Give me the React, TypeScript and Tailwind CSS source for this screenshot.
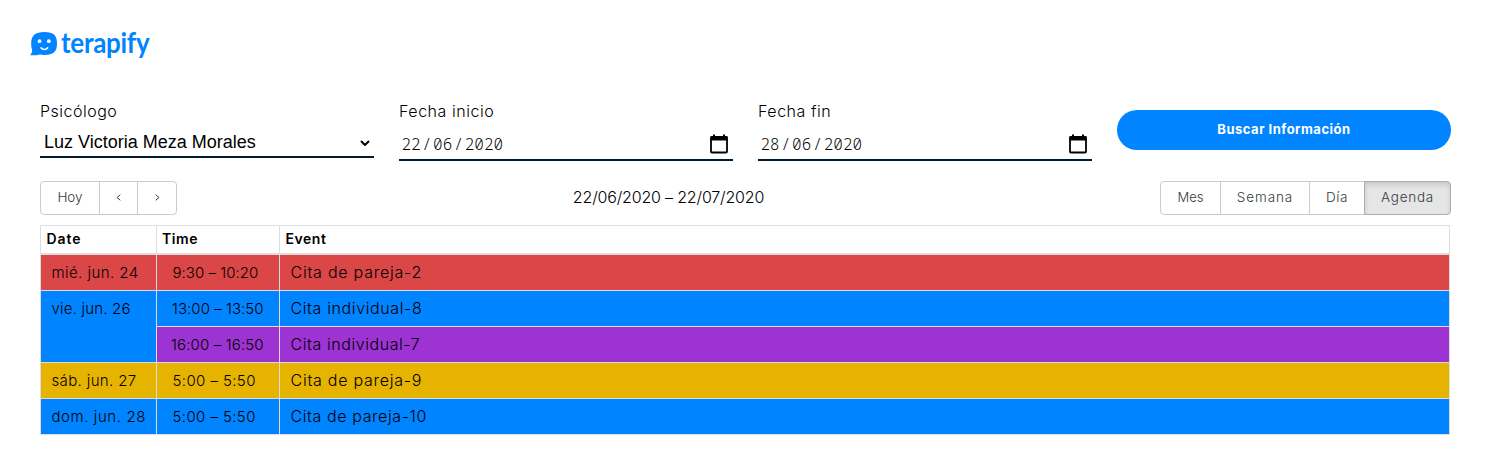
import type { ReactNode } from "react";

const BLUE = "bg-[#0084ff]";
const RED = "bg-[#db4646]";
const PURPLE = "bg-[#9d33d3]";
const YELLOW = "bg-[#e6b300]";

type Row = {
  date?: { text: string; tracking: string; span?: number };
  time: string;
  timeClass: string;
  event: string;
  eventClass: string;
  color: string;
};

const rows: Row[] = [
  { date: { text: "mié. jun. 24", tracking: "tracking-[0.44px]" }, time: "9:30 – 10:20", timeClass: "pl-[15.5px] tracking-[0.04px]", event: "Cita de pareja-2", eventClass: "tracking-[0.77px]", color: RED },
  { date: { text: "vie. jun. 26", tracking: "tracking-[0.2px]", span: 2 }, time: "13:00 – 13:50", timeClass: "pl-[15px] tracking-[0.04px]", event: "Cita individual-8", eventClass: "tracking-[0.62px]", color: BLUE },
  { time: "16:00 – 16:50", timeClass: "pl-[14px] tracking-[0.14px]", event: "Cita individual-7", eventClass: "tracking-[0.57px]", color: PURPLE },
  { date: { text: "sáb. jun. 27", tracking: "tracking-[0.36px]" }, time: "5:00 – 5:50", timeClass: "pl-[15.5px] tracking-[0.4px]", event: "Cita de pareja-9", eventClass: "tracking-[0.75px]", color: YELLOW },
  { date: { text: "dom. jun. 28", tracking: "tracking-[0.58px]" }, time: "5:00 – 5:50", timeClass: "pl-[15.5px] tracking-[0.4px]", event: "Cita de pareja-10", eventClass: "tracking-[0.6px]", color: BLUE },
];

function Logo() {
  return (
    <div className="flex h-[30px] items-start text-[#0084ff]">
      <svg className="mt-[2px] h-6 w-7" viewBox="0 0 28 24" fill="none">
        <path
          d="M14.500 0C23.500 0 27 3.200 27 11.400S23.500 22.900 14.500 22.900c-1.700 0-3.200-.1-4.600-.4C7.200 23.300 3.600 23.500 0 23.200c1.700-1.500 2.300-3.300 2.100-5.600C1.400 15.900 1.200 13.800 1.200 11.400 1.200 3.200 5.500 0 14.500 0Z"
          fill="currentColor"
        />
        <circle cx="9.500" cy="9.200" r="1.900" fill="white" />
        <circle cx="18.800" cy="9.200" r="1.900" fill="white" />
        <path d="M11 15.800c1.700 2.400 5 2.400 6.700 0" stroke="white" strokeWidth="1.500" strokeLinecap="round" />
      </svg>
      <span className="ml-[3px] mt-[-3px] origin-center scale-y-[1.08] whitespace-nowrap font-['Lato'] text-[26px] font-bold leading-[30px] tracking-[-0.28px]">
        terapify
      </span>
    </div>
  );
}

function Field({ label, tracking, children }: { label: string; tracking: string; children: ReactNode }) {
  return (
    <label className="flex w-[334px] flex-col">
      <span className={`h-6 whitespace-nowrap text-[16px] font-light leading-6 ${tracking}`}>{label}</span>
      {children}
    </label>
  );
}

function DateInput({ day, month, year }: { day: string; month: string; year: string }) {
  return (
    <div className="flex h-[38px] items-center justify-between border-b-2 border-[#001c33] pl-[2.5px] pr-1">
      <span className="pt-[6px] font-['Noto_Sans_Mono','Liberation_Mono',monospace] text-[16px] font-[350] leading-6">
        {day}
        <span className="px-[1.4px]">/</span>
        {month}
        <span className="px-[1.4px]">/</span>
        {year}
      </span>
      <svg className="mt-[5px] h-5 w-5" viewBox="0 0 20 20" fill="none">
        <rect x="2" y="3" width="16" height="15.500" rx="1" stroke="black" strokeWidth="1.800" />
        <path d="M1.500 2.200h17V6.500h-17zM4 0.500h2v2H4zM14 0.500h2v2h-2z" fill="black" />
      </svg>
    </div>
  );
}

const groupButton =
  "-ml-px flex h-[34px] items-center justify-center border border-[#cccccc] pb-px text-[#373a3c] font-light first:ml-0 first:rounded-l last:rounded-r";

export default function App() {
  return (
    <main className="min-h-[473px] w-[1491px] bg-white font-['Inter','Open_Sans',sans-serif] text-black">
      <header className="pl-[30px] pt-[30px]">
        <Logo />
      </header>

      <section className="mt-[39px] flex gap-[25px] px-10">
        <Field label="Psicólogo" tracking="tracking-[0.5px]">
          <div className="flex h-[35px] items-center justify-between border-b-2 border-[#001c33] pl-1 pr-1">
            <span className="whitespace-nowrap pt-[5px] font-['Liberation_Sans',Arial,sans-serif] text-[18px] leading-6">
              Luz Victoria Meza Morales
            </span>
            <svg className="mt-[6px] h-[6px] w-[10px]" viewBox="0 0 10 6" fill="none">
              <path d="M1 1l4 4 4-4" stroke="black" strokeWidth="2" />
            </svg>
          </div>
        </Field>
        <Field label="Fecha inicio" tracking="tracking-[0.54px]">
          <DateInput day="22" month="06" year="2020" />
        </Field>
        <Field label="Fecha fin" tracking="tracking-[0.54px]">
          <DateInput day="28" month="06" year="2020" />
        </Field>
        <button className="mt-[11px] h-10 w-[334px] rounded-full bg-[#0084ff] pb-px text-[13px] font-bold tracking-[0.5px] text-white">
          Buscar Información
        </button>
      </section>

      <section className="mt-5 flex items-center justify-between px-10">
        <div className="flex w-[291px]">
          <button className={`${groupButton} w-[60px] text-[13.5px]`}>Hoy</button>
          <button className={`${groupButton} w-[39px]`}>
            <svg className="h-[7px] w-[5px]" viewBox="0 0 5 7" fill="none">
              <path d="M4.300.7 1 3.500l3.300 2.800" stroke="currentColor" />
            </svg>
          </button>
          <button className={`${groupButton} w-[40px]`}>
            <svg className="h-[7px] w-[5px]" viewBox="0 0 5 7" fill="none">
              <path d="M.7.7 4 3.500.7 6.300" stroke="currentColor" />
            </svg>
          </button>
        </div>
        <span className="ml-[-154px] whitespace-nowrap pb-[3px] text-[16px] font-light tracking-[-0.18px]">22/06/2020 – 22/07/2020</span>
        <div className="flex">
          <button className={`${groupButton} w-[61px] text-[13px]`}>Mes</button>
          <button className={`${groupButton} w-[90px] text-[13.5px] tracking-[0.9px]`}>Semana</button>
          <button className={`${groupButton} w-[56px] text-[13.5px] tracking-[0.6px]`}>Día</button>
          <button className="-ml-px flex h-[34px] w-[87px] items-center justify-center rounded-r border border-[#adadad] bg-[#e6e6e6] pb-px text-[13.5px] font-light tracking-[0.75px] text-[#373a3c] shadow-[inset_0_3px_5px_rgba(0,0,0,0.125)]">
            Agenda
          </button>
        </div>
      </section>

      <table className="ml-10 mt-[10px] w-[1410px] table-fixed border-separate border-spacing-0 border-l border-t border-[#dddddd]">
        <colgroup>
          <col className="w-[116px]" />
          <col className="w-[123px]" />
          <col className="w-[1170px]" />
        </colgroup>
        <thead>
          <tr className="h-[29px] text-left text-[14px] leading-5">
            <th className="border-b-2 border-r border-[#dddddd] p-0 pb-[2px] pl-[5.5px] font-semibold tracking-[0.95px]">Date</th>
            <th className="border-b-2 border-r border-[#dddddd] p-0 pb-[2px] pl-[5px] font-semibold tracking-[0.6px]">Time</th>
            <th className="border-b-2 border-r border-[#dddddd] p-0 pb-[2px] pl-[5.5px] font-semibold tracking-[0.55px]">Event</th>
          </tr>
        </thead>
        <tbody>
          {rows.map((row, i) => (
            <tr key={i} className={`h-9 whitespace-nowrap text-[15px] font-light leading-6 ${row.color}`}>
              {row.date && (
                <td
                  rowSpan={row.date.span ?? 1}
                  className={`border-b border-r border-[#dddddd] p-0 pl-[10.5px] pt-[6px] align-top ${row.color} ${row.date.tracking}`}
                >
                  {row.date.text}
                </td>
              )}
              <td className={`border-b border-r border-[#dddddd] p-0 pt-[6px] align-top ${row.timeClass}`}>{row.time}</td>
              <td className={`border-b border-r border-[#dddddd] p-0 pl-[10.5px] pt-[5px] align-top text-[16px] ${row.eventClass}`}>
                {row.event}
              </td>
            </tr>
          ))}
        </tbody>
      </table>
    </main>
  );
}
